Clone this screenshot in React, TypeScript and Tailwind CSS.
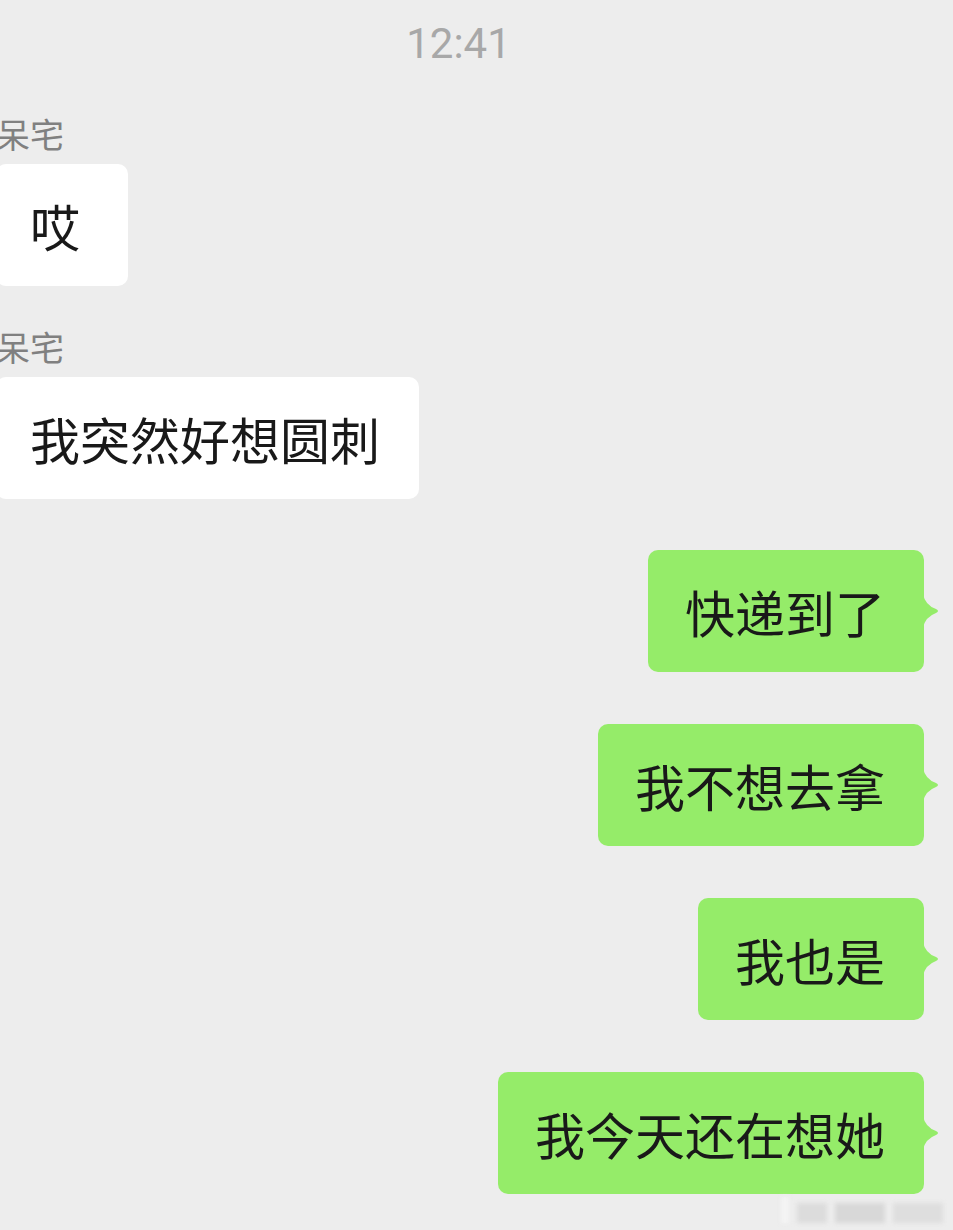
const CJK = "font-['Noto_Sans_CJK_SC','Noto_Sans',sans-serif]";

type Msg = { from: 'them' | 'me'; text: string; name?: string };

const messages: Msg[] = [
  { from: 'them', name: '呆宅', text: '哎' },
  { from: 'them', name: '呆宅', text: '我突然好想圆刺' },
  { from: 'me', text: '快递到了' },
  { from: 'me', text: '我不想去拿' },
  { from: 'me', text: '我也是' },
  { from: 'me', text: '我今天还在想她' },
];

function TheirBubble({ name, text, first }: { name?: string; text: string; first: boolean }) {
  return (
    <div className={`flex flex-col items-start -ml-[4px] ${first ? '' : 'mt-[41px]'}`}>
      <div className="text-[34px] leading-[40px] text-[#808080]">{name}</div>
      <div className="mt-[10px] flex h-[122px] min-w-[132px] items-center rounded-[10px] bg-white pl-[34px] pr-[39px] text-[50px] leading-none text-[#191919]">
        {text}
      </div>
    </div>
  );
}

function MyBubble({ text, first }: { text: string; first: boolean }) {
  return (
    <div className={`flex justify-end pr-[29px] ${first ? 'mt-[51px]' : 'mt-[52px]'}`}>
      <div className="relative flex h-[122px] items-center rounded-[10px] bg-[#95ec69] pl-[37px] pr-[39px] text-[50px] leading-none text-[#191919]">
        {text}
        <svg
          className="absolute right-[-16px] top-1/2 -translate-y-1/2"
          width="17"
          height="34"
          viewBox="0 0 17 34"
        >
          <path d="M0 0 Q2 11 13 15 Q17 17 13 19 Q2 23 0 34 Z" fill="#95ec69" />
        </svg>
      </div>
    </div>
  );
}

export default function App() {
  let seenThem = false;
  let seenMe = false;
  return (
    <div className={`h-[1230px] w-[953px] overflow-hidden bg-[#ededed] ${CJK}`}>
      <div className="flex justify-center pt-[22px] pr-[36px]">
        <span className="font-['Roboto',sans-serif] text-[42px] leading-[44px] text-[#a8a8a8]">12:41</span>
      </div>
      <div className="mt-[48px] flex flex-col">
        {messages.map((m, i) => {
          if (m.from === 'them') {
            const first = !seenThem;
            seenThem = true;
            return <TheirBubble key={i} name={m.name} text={m.text} first={first} />;
          }
          const first = !seenMe;
          seenMe = true;
          return <MyBubble key={i} text={m.text} first={first} />;
        })}
      </div>
      {/* blurred watermark */}
      <div className="mt-[3px] flex items-end justify-end gap-[8px] pr-[10px] blur-[2px]">
        <span className="h-[26px] w-[8px] bg-[#f4f4f4]" />
        <span className="h-[20px] w-[30px] bg-[#dcdcdc]" />
        <span className="h-[20px] w-[50px] bg-[#d8d8d8]" />
        <span className="h-[20px] w-[50px] bg-[#dedede]" />
      </div>
    </div>
  );
}
